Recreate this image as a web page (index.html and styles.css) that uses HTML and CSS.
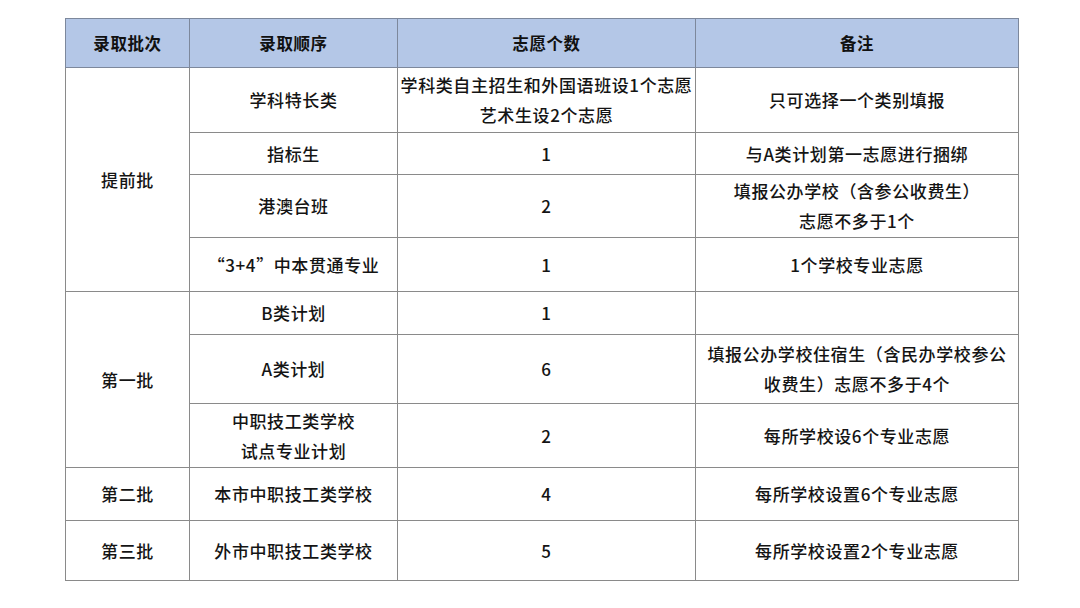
FILE: index.html
```html
<!DOCTYPE html>
<html lang="zh">
<head>
<meta charset="utf-8">
<link rel="stylesheet" href="styles.css">
</head>
<body>
<table class="plan">
  <colgroup>
    <col class="c1"><col class="c2"><col class="c3"><col class="c4">
  </colgroup>
  <thead>
    <tr class="rh"><th>录取批次</th><th>录取顺序</th><th>志愿个数</th><th>备注</th></tr>
  </thead>
  <tbody>
    <tr class="r1"><td rowspan="4">提前批</td><td>学科特长类</td><td>学科类自主招生和外国语班设1个志愿<br>艺术生设2个志愿</td><td>只可选择一个类别填报</td></tr>
    <tr class="r2"><td>指标生</td><td>1</td><td>与A类计划第一志愿进行捆绑</td></tr>
    <tr class="r3"><td>港澳台班</td><td>2</td><td>填报公办学校（含参公收费生）<br>志愿不多于1个</td></tr>
    <tr class="r4"><td>“3+4”中本贯通专业</td><td>1</td><td>1个学校专业志愿</td></tr>
    <tr class="r5"><td rowspan="3">第一批</td><td>B类计划</td><td>1</td><td></td></tr>
    <tr class="r6"><td>A类计划</td><td>6</td><td>填报公办学校住宿生（含民办学校参公<br>收费生）志愿不多于4个</td></tr>
    <tr class="r7"><td>中职技工类学校<br>试点专业计划</td><td>2</td><td>每所学校设6个专业志愿</td></tr>
    <tr class="r8"><td>第二批</td><td>本市中职技工类学校</td><td>4</td><td>每所学校设置6个专业志愿</td></tr>
    <tr class="r9"><td>第三批</td><td>外市中职技工类学校</td><td>5</td><td>每所学校设置2个专业志愿</td></tr>
  </tbody>
</table>
</body>
</html>
```

FILE: styles.css
```css
html, body {
  margin: 0;
  padding: 0;
  background: #ffffff;
}
body {
  padding: 18px 0 0 65px;
  font-family: "Noto Sans CJK SC", "Noto Sans", sans-serif;
  color: #141414;
}
.plan {
  border-collapse: collapse;
  table-layout: fixed;
  width: 953px;
  border: 1px solid #8a8a8a;
}
.c1 { width: 124px; }
.c2 { width: 208px; }
.c3 { width: 298px; }
.c4 { width: 323px; }
.plan th, .plan td {
  border: 1px solid #8a8a8a;
  padding: 0;
  text-align: center;
  vertical-align: middle;
  font-size: 17px;
  font-weight: 500;
  line-height: 30px;
  letter-spacing: 0.6px;
  white-space: nowrap;
}
.plan th {
  background: #b4c7e7;
  font-size: 16.5px;
  font-weight: 700;
  border-color: #7d889c;
  color: #111111;
}
.rh { height: 49px; }
.r1 { height: 65px; }
.r2 { height: 42px; }
.r3 { height: 63px; }
.r4 { height: 54px; }
.r5 { height: 43px; }
.r6 { height: 69px; }
.r7 { height: 64px; }
.r8 { height: 53px; }
.r9 { height: 60px; }
```
